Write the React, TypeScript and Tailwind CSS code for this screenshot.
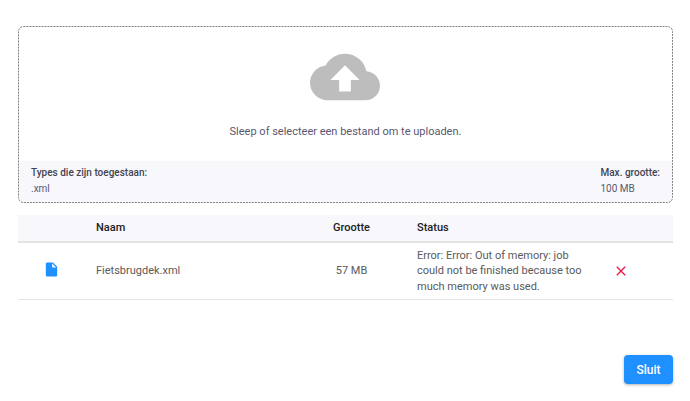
import React from "react";

function CloudUpload() {
  return (
    <svg width="70" height="70" viewBox="0 0 24 24" fill="#bdbdbd">
      <path d="M19.35 10.04C18.67 6.59 15.64 4 12 4 9.11 4 6.6 5.64 5.35 8.04 2.34 8.36 0 10.91 0 14c0 3.31 2.69 6 6 6h13c2.76 0 5-2.24 5-5 0-2.64-2.05-4.78-4.65-4.96zM14 13v4h-4v-4H7l5-5 5 5h-3z" />
    </svg>
  );
}

function FileIcon() {
  return (
    <svg width="17" height="17" viewBox="0 0 24 24" fill="#1e90ff">
      <path d="M14 2H6c-1.1 0-1.99.9-1.99 2L4 20c0 1.1.89 2 1.99 2H18c1.1 0 2-.9 2-2V8l-6-6zm-1 7V3.5L18.5 9H13z" />
    </svg>
  );
}

function CloseIcon() {
  return (
    <svg width="16" height="16" viewBox="0 0 24 24" fill="#f0174b">
      <path d="M19 6.41L17.59 5 12 10.59 6.41 5 5 6.41 10.59 12 5 17.59 6.41 19 12 13.41 17.59 19 19 17.59 13.41 12z" />
    </svg>
  );
}

// chrome's own dashed border can't do the tight 2/1 pattern
function DashedOutline() {
  return (
    <svg className="pointer-events-none absolute -inset-px" width="655" height="177">
      <rect x="0.5" y="0.5" width="654" height="176" rx="5" fill="none" stroke="#808080" strokeDasharray="2 1" />
    </svg>
  );
}

export default function App() {
  return (
    <div className="flex h-[401px] w-[690px] flex-col bg-white pl-[18px] pr-[17px] pt-[26px] font-['Roboto',sans-serif] text-[11px]">
      <div className="relative flex h-[177px] flex-col rounded-[5px] border border-transparent">
        <div className="flex h-[134px] flex-col items-center">
          <div className="mt-[15px] h-[70px] pr-[2px]">
            <CloudUpload />
          </div>
          <p className="mt-[11px] leading-[18px] text-[#5b5770]">Sleep of selecteer een bestand om te uploaden.</p>
        </div>
        <div className="flex h-[41px] justify-between rounded-b-[4px] bg-[#f8f8fc] px-[12px] pt-[4px] text-[10px] leading-[16px] text-[#5b5770]">
          <div>
            <div className="font-medium text-[#44434f]">Types die zijn toegestaan:</div>
            <div>.xml</div>
          </div>
          <div>
            <div className="font-medium text-[#44434f]">Max. grootte:</div>
            <div>100 MB</div>
          </div>
        </div>
        <DashedOutline />
      </div>

      <div className="mt-[12px] grid grid-cols-[78px_190px_131px_196px_1fr]">
        <div className="contents font-medium text-[#212121]">
          <div className="h-[28px] border-b-2 border-[#e4e4e4] bg-[#f8f8fc]" />
          <div className="flex h-[28px] items-center border-b-2 border-[#e4e4e4] bg-[#f8f8fc]">Naam</div>
          <div className="flex h-[28px] items-center justify-center border-b-2 border-[#e4e4e4] bg-[#f8f8fc]">Grootte</div>
          <div className="flex h-[28px] items-center border-b-2 border-[#e4e4e4] bg-[#f8f8fc]">Status</div>
          <div className="h-[28px] border-b-2 border-[#e4e4e4] bg-[#f8f8fc]" />
        </div>
        <div className="contents text-[#5a5a5a]">
          <div className="flex h-[57px] items-center justify-center border-b border-[#e4e4e4] pb-[3px] pr-[12px]">
            <FileIcon />
          </div>
          <div className="flex h-[57px] items-center border-b border-[#e4e4e4]">Fietsbrugdek.xml</div>
          <div className="flex h-[57px] items-center justify-center border-b border-[#e4e4e4]">57 MB</div>
          <div className="flex h-[57px] items-center border-b border-[#e4e4e4] pr-[20px] leading-[15.5px]">
            <p>Error: Error: Out of memory: job could not be finished because too much memory was used.</p>
          </div>
          <div className="flex h-[57px] items-center border-b border-[#e4e4e4]">
            <CloseIcon />
          </div>
        </div>
      </div>

      <div className="mt-[55px] flex justify-end">
        <button className="h-[29px] w-[49px] rounded-[4px] bg-[#1e90ff] text-[12px] font-medium text-white shadow-[0_1px_3px_rgba(0,0,0,0.3)]">
          Sluit
        </button>
      </div>
    </div>
  );
}
